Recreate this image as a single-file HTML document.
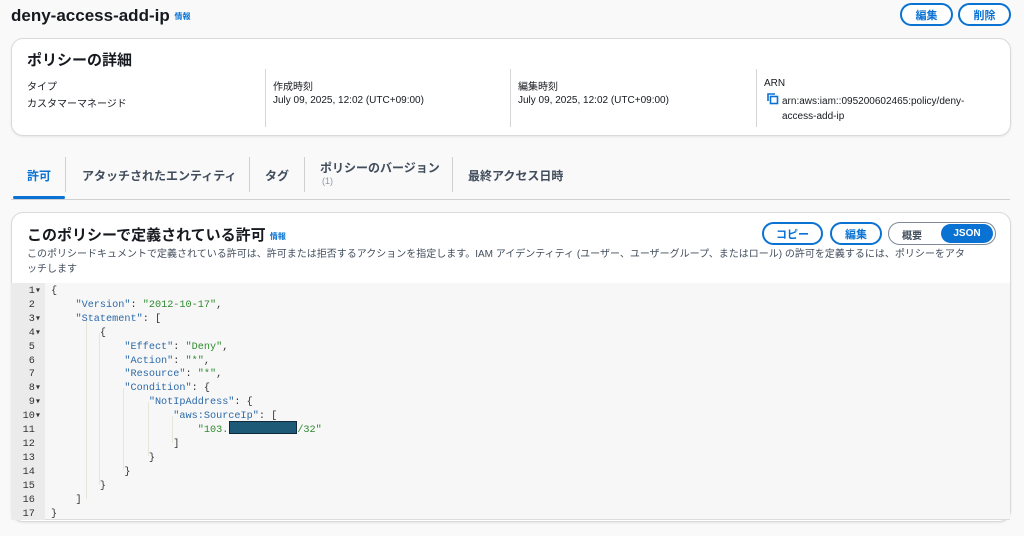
<!DOCTYPE html>
<html><head><meta charset="utf-8"><style>
*{margin:0;padding:0;box-sizing:border-box}
body{width:1024px;height:536px;background:#f9f9f9;font-family:"Liberation Sans","Noto Sans CJK JP",sans-serif;color:#16191f;position:relative;overflow:hidden}
.a{position:absolute;white-space:nowrap}
.btn{position:absolute;border:2px solid #0972d3;border-radius:12px;color:#0972d3;font-weight:bold;font-size:11px;display:flex;align-items:center;justify-content:center;background:#fff}
.card{position:absolute;background:#fff;border:1px solid #dadada;border-radius:12px;box-shadow:0 1px 2px rgba(0,0,0,.08)}
.lab{font-size:10px;color:#16191f}
.val{font-size:10px;color:#16191f}
.vd{position:absolute;width:1px;background:#d5d5d5;top:69px;height:58px}
.tab{position:absolute;font-size:12px;font-weight:bold;color:#414d5c}
.ts{position:absolute;width:1px;background:#d0d0d0;top:157px;height:35px}
.info{color:#0972d3;font-size:8px;font-weight:bold}
.code{position:absolute;left:11px;top:283px;width:999px;height:237px;background:#f7f7f7;border-bottom:1px solid #ddd}
.gut{position:absolute;left:0;top:0;width:34px;height:237px;background:#ebebeb}
.ln{position:absolute;right:0;width:30px;text-align:left;font-family:"Liberation Mono",monospace;font-size:10.2px;color:#333}
.cl{position:absolute;left:40px;font-family:"Liberation Mono",monospace;font-size:10.2px;color:#333;white-space:pre}
.k{color:#2c6aa8}.s{color:#2f8a2f}
.g{position:absolute;width:1px;background:#e6e6d8}
.red{display:inline-block;width:69px;height:1px;position:relative;vertical-align:baseline}
.red::after{content:"";position:absolute;left:1px;top:-10px;width:68px;height:13px;background:#1d5a78;border:1.5px solid #0f2a3a;box-sizing:border-box}
</style></head><body>
<div class="a" style="left:11px;top:6px;font-size:17px;font-weight:bold">deny-access-add-ip <span class="info" style="vertical-align:2px">情報</span></div>
<div class="btn" style="left:900px;top:3px;width:53px;height:23px">編集</div>
<div class="btn" style="left:958px;top:3px;width:53px;height:23px">削除</div>

<div class="card" style="left:11px;top:38px;width:1000px;height:98px"></div>
<div class="a" style="left:27px;top:49px;font-size:15px;font-weight:bold">ポリシーの詳細</div>
<div class="a lab" style="left:27px;top:78px">タイプ</div>
<div class="a val" style="left:27px;top:95px">カスタマーマネージド</div>
<div class="vd" style="left:265px"></div>
<div class="a lab" style="left:273px;top:78px">作成時刻</div>
<div class="a val" style="left:273px;top:95px">July 09, 2025, 12:02 (UTC+09:00)</div>
<div class="vd" style="left:510px"></div>
<div class="a lab" style="left:518px;top:78px">編集時刻</div>
<div class="a val" style="left:518px;top:95px">July 09, 2025, 12:02 (UTC+09:00)</div>
<div class="vd" style="left:756px"></div>
<div class="a lab" style="left:764px;top:78px">ARN</div>
<svg class="a" style="left:767px;top:93px" width="12" height="12" viewBox="0 0 12 12"><path d="M1 8V1h7" fill="none" stroke="#0972d3" stroke-width="1.6"/><rect x="3.5" y="3.5" width="7" height="7" fill="none" stroke="#0972d3" stroke-width="1.6"/></svg>
<div class="a val" style="left:782px;top:94px;line-height:15px">arn:aws:iam::095200602465:policy/deny-<br>access-add-ip</div>

<div class="a" style="left:11px;top:199px;width:999px;height:1px;background:#d0d0d0"></div>
<div class="a" style="left:13px;top:196px;width:52px;height:3px;background:#0972d3;border-radius:2px"></div>
<div class="tab" style="left:27px;top:167px;color:#0972d3">許可</div>
<div class="ts" style="left:65px"></div>
<div class="tab" style="left:82px;top:167px">アタッチされたエンティティ</div>
<div class="ts" style="left:249px"></div>
<div class="tab" style="left:265px;top:167px">タグ</div>
<div class="ts" style="left:304px"></div>
<div class="tab" style="left:320px;top:159px">ポリシーのバージョン</div>
<div class="a" style="left:322px;top:176px;font-size:9px;color:#8d99a8">(1)</div>
<div class="ts" style="left:452px"></div>
<div class="tab" style="left:468px;top:167px">最終アクセス日時</div>

<div class="card" style="left:11px;top:212px;width:1000px;height:310px"></div>
<div class="a" style="left:27px;top:224px;font-size:15px;font-weight:bold">このポリシーで定義されている許可 <span class="info" style="vertical-align:1px">情報</span></div>
<div class="a" style="left:27px;top:247px;font-size:10px;color:#414d5c;line-height:15px">このポリシードキュメントで定義されている許可は、許可または拒否するアクションを指定します。IAM アイデンティティ (ユーザー、ユーザーグループ、またはロール) の許可を定義するには、ポリシーをアタ<br>ッチします</div>
<div class="btn" style="left:762px;top:222px;width:61px;height:23px">コピー</div>
<div class="btn" style="left:830px;top:222px;width:52px;height:23px">編集</div>
<div class="a" style="left:888px;top:222px;width:108px;height:23px;border:1.5px solid #7d8998;border-radius:12px;background:#fff"></div>
<div class="a" style="left:902px;top:227px;font-size:10px;font-weight:bold;color:#414d5c">概要</div>
<div class="a" style="left:941px;top:224px;width:52px;height:19px;background:#0972d3;border-radius:10px;color:#fff;font-size:10px;font-weight:bold;text-align:center;line-height:19px">JSON</div>

<div class="code">
<div class="gut"></div>
<div class="g" style="left:75px;top:36px;height:180px"></div>
<div class="g" style="left:88px;top:50px;height:152px"></div>
<div class="g" style="left:112px;top:105px;height:82px"></div>
<div class="g" style="left:137px;top:119px;height:54px"></div>
<div class="g" style="left:161px;top:133px;height:27px"></div>
</div>
<div style="position:absolute;left:11px;top:285px">
<div class="ln" style="left:0;width:34px;top:0;line-height:13.9px;text-align:right;padding-right:4px;white-space:pre">1▾
2 
3▾
4▾
5 
6 
7 
8▾
9▾
10▾
11 
12 
13 
14 
15 
16 
17 </div>
<div class="cl" style="top:0;line-height:13.9px">{
    <span class="k">"Version"</span>: <span class="s">"2012-10-17"</span>,
    <span class="k">"Statement"</span>: [
        {
            <span class="k">"Effect"</span>: <span class="s">"Deny"</span>,
            <span class="k">"Action"</span>: <span class="s">"*"</span>,
            <span class="k">"Resource"</span>: <span class="s">"*"</span>,
            <span class="k">"Condition"</span>: {
                <span class="k">"NotIpAddress"</span>: {
                    <span class="k">"aws:SourceIp"</span>: [
                        <span class="s">"103.<span class="red"></span>/32"</span>
                    ]
                }
            }
        }
    ]
}</div>
</div>
</body></html>
